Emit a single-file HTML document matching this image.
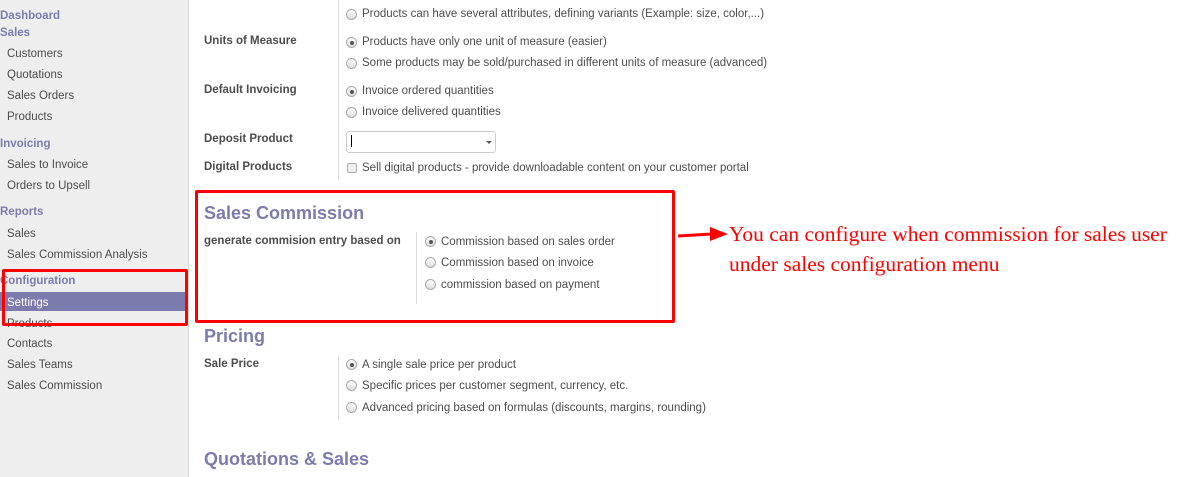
<!DOCTYPE html>
<html><head><meta charset="utf-8"><style>
body{margin:0;width:1184px;height:477px;overflow:hidden;background:#fff;font-family:"Liberation Sans",sans-serif;position:relative}
.a{position:absolute;white-space:nowrap;line-height:16px;font-size:11.5px;color:#4c4c4c}
.sb{position:absolute;left:0;top:0;width:188px;height:477px;background:#efeeef;border-right:1px solid #d8d8d8}
.h{color:#7c7bad;font-weight:bold}
.i{left:7px;color:#4c4c4c}
.l{font-weight:bold;color:#4c4c4c}
.r{position:absolute;width:9px;height:9px;border:1px solid #aaa;border-radius:50%;background:linear-gradient(#fff,#ddd)}
.r.on::after{content:"";position:absolute;left:2.5px;top:2.5px;width:4px;height:4px;border-radius:50%;background:#555}
.vl{position:absolute;width:1px;background:#ddd}
.H{position:absolute;color:#7c7bad;font-weight:bold;font-size:18px;white-space:nowrap}
.box{position:absolute;border:3px solid #f00;border-radius:2px}
</style></head><body>
<div class="sb"></div>
<div class="a h" style="left:0;top:8px">Dashboard</div>
<div class="a h" style="left:0;top:25px">Sales</div>
<div class="a i" style="top:46px">Customers</div>
<div class="a i" style="top:67px">Quotations</div>
<div class="a i" style="top:88px">Sales Orders</div>
<div class="a i" style="top:109px">Products</div>
<div class="a h" style="left:0;top:136px">Invoicing</div>
<div class="a i" style="top:157px">Sales to Invoice</div>
<div class="a i" style="top:178px">Orders to Upsell</div>
<div class="a h" style="left:0;top:204px">Reports</div>
<div class="a i" style="top:226px">Sales</div>
<div class="a i" style="top:247px">Sales Commission Analysis</div>
<div class="a h" style="left:0;top:273px">Configuration</div>
<div style="position:absolute;left:0;top:292px;width:185px;height:19px;background:#7c7bad"></div>
<div class="a i" style="top:295px;color:#fff">Settings</div>
<div class="a i" style="top:316px">Products</div>
<div class="a i" style="top:336px">Contacts</div>
<div class="a i" style="top:357px">Sales Teams</div>
<div class="a i" style="top:378px">Sales Commission</div>
<div class="box" style="left:2px;top:269px;width:180px;height:51px"></div>

<div class="vl" style="left:338px;top:0;height:180px"></div>
<div class="r" style="left:346px;top:9px"></div><div class="a" style="left:362px;top:6px">Products can have several attributes, defining variants (Example: size, color,...)</div>
<div class="a l" style="left:204px;top:33px">Units of Measure</div>
<div class="r on" style="left:346px;top:37px"></div><div class="a" style="left:362px;top:34px">Products have only one unit of measure (easier)</div>
<div class="r" style="left:346px;top:58px"></div><div class="a" style="left:362px;top:55px">Some products may be sold/purchased in different units of measure (advanced)</div>
<div class="a l" style="left:204px;top:82px">Default Invoicing</div>
<div class="r on" style="left:346px;top:86px"></div><div class="a" style="left:362px;top:83px">Invoice ordered quantities</div>
<div class="r" style="left:346px;top:107px"></div><div class="a" style="left:362px;top:104px">Invoice delivered quantities</div>
<div class="a l" style="left:204px;top:131px">Deposit Product</div>
<div style="position:absolute;left:346px;top:131px;width:148px;height:20px;border:1px solid #ccc;border-radius:3px"></div>
<div style="position:absolute;left:351px;top:135px;width:1px;height:12px;background:#000"></div>
<div style="position:absolute;left:486px;top:141px;border:3px solid transparent;border-top-color:#555"></div>
<div class="a l" style="left:204px;top:159px">Digital Products</div>
<div style="position:absolute;left:347px;top:163px;width:8px;height:8px;border:1px solid #aaa;border-radius:2px;background:#eee"></div>
<div class="a" style="left:362px;top:160px">Sell digital products - provide downloadable content on your customer portal</div>

<div class="box" style="left:195px;top:190px;width:474px;height:127px"></div>
<div class="H" style="left:204px;top:203px">Sales Commission</div>
<div class="a l" style="left:204px;top:233px">generate commision entry based on</div>
<div class="vl" style="left:416px;top:232px;height:72px"></div>
<div class="r on" style="left:425px;top:236px"></div><div class="a" style="left:441px;top:234px">Commission based on sales order</div>
<div class="r" style="left:425px;top:257px"></div><div class="a" style="left:441px;top:255px">Commission based on invoice</div>
<div class="r" style="left:425px;top:279px"></div><div class="a" style="left:441px;top:277px">commission based on payment</div>

<svg style="position:absolute;left:678px;top:226px" width="52" height="18"><line x1="0" y1="10" x2="34" y2="8" stroke="#f00" stroke-width="3"/><polygon points="32,1 50,8 32,15" fill="#f00"/></svg>
<div style="position:absolute;left:729px;top:219px;font-family:'Liberation Serif',serif;font-size:21.5px;color:#f00;line-height:30px;white-space:nowrap">You can configure when commission for sales user<br>under sales configuration menu</div>

<div class="H" style="left:204px;top:326px">Pricing</div>
<div class="vl" style="left:338px;top:355px;height:65px"></div>
<div class="a l" style="left:204px;top:356px">Sale Price</div>
<div class="r on" style="left:346px;top:359px"></div><div class="a" style="left:362px;top:357px">A single sale price per product</div>
<div class="r" style="left:346px;top:380px"></div><div class="a" style="left:362px;top:378px">Specific prices per customer segment, currency, etc.</div>
<div class="r" style="left:346px;top:402px"></div><div class="a" style="left:362px;top:400px">Advanced pricing based on formulas (discounts, margins, rounding)</div>
<div class="H" style="left:204px;top:449px">Quotations &amp; Sales</div>
</body></html>
